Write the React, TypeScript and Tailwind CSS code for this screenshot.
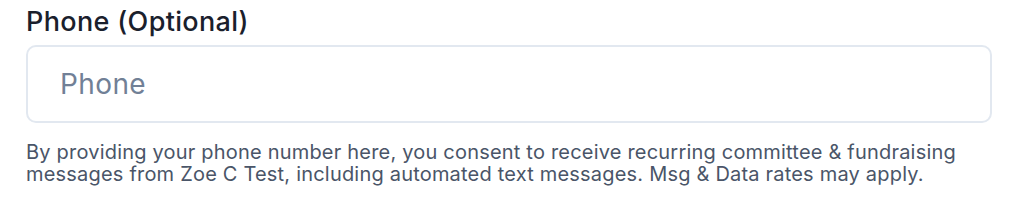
export default function App() {
  return (
    <div className="w-[1018px] h-[216px] bg-white font-['Inter',sans-serif]">
      <div className="px-[26px] pt-[5px]">
        <label className="block text-[27px] leading-[34px] font-medium tracking-[0.35px] text-[#1a202c]">Phone (Optional)</label>
        <input
          type="tel"
          placeholder="Phone"
          className="mt-[6px] block w-full h-[78px] rounded-[10px] border-2 border-[#e2e8f0] bg-white pl-[32px] text-[28px] tracking-[0.4px] text-[#1a202c] placeholder:text-[#718096] outline-none"
        />
        <p className="mt-[18px] text-[20px] leading-[22px] tracking-[0.2px] text-[#4a5568]">
          By providing your phone number here, you consent to receive recurring committee &amp; fundraising messages from Zoe C Test, including automated text messages. Msg &amp; Data rates may apply.
        </p>
      </div>
    </div>
  );
}
